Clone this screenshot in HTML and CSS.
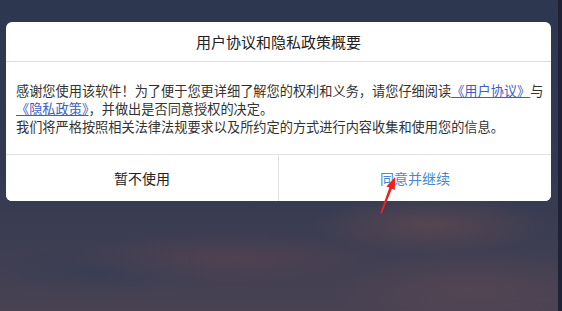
FILE: index.html
```html
<!DOCTYPE html>
<html lang="zh-CN">
<head>
<meta charset="utf-8">
<link rel="stylesheet" href="styles.css">
</head>
<body>
<div class="screen">
  <div class="dialog">
    <div class="dialog-title">用户协议和隐私政策概要</div>
    <div class="dialog-body">
      <p>感谢您使用该软件！为了便于您更详细了解您的权利和义务，请您仔细阅读<a class="link">《用户协议》</a>与<br><a class="link">《隐私政策》</a>，并做出是否同意授权的决定。</p>
      <p>我们将严格按照相关法律法规要求以及所约定的方式进行内容收集和使用您的信息。</p>
    </div>
    <div class="dialog-actions">
      <button class="btn btn-cancel">暂不使用</button>
      <button class="btn btn-ok">同意并继续</button>
    </div>
  </div>
  <svg class="arrow" width="24" height="44" viewBox="0 0 24 44">
    <path d="M4.2 40 L5.8 40.6 L16 15.8 L18.8 17 L19.2 4 L10.4 13.4 L13.4 14.6 Z" fill="#e8241c"/>
  </svg>
</div>
</body>
</html>
```
FILE: styles.css
```css
* { box-sizing: border-box; }
html, body { margin: 0; padding: 0; }
body {
  width: 562px;
  height: 311px;
  overflow: hidden;
  font-family: "Noto Sans CJK SC", "Noto Sans", sans-serif;
}
.screen {
  position: relative;
  width: 562px;
  height: 311px;
  padding: 22px 0 0 6px;
  border-right: 4px solid #1e2234;
  background:
    radial-gradient(ellipse 120px 30px at 430px 225px, rgba(120, 80, 80, 0.45), transparent),
    radial-gradient(ellipse 160px 25px at 230px 258px, rgba(110, 70, 80, 0.35), transparent),
    radial-gradient(ellipse 140px 40px at 470px 290px, rgba(105, 75, 85, 0.4), transparent),
    radial-gradient(ellipse 120px 25px at 100px 272px, rgba(50, 60, 85, 0.5), transparent),
    linear-gradient(to bottom, #2d374f 0%, #313a52 55%, #3c3d52 75%, #484252 100%);
}
.dialog {
  width: 545px;
  background: #fff;
  border-radius: 6px;
  overflow: hidden;
}
.dialog-title {
  height: 40px;
  line-height: 39px;
  text-align: center;
  font-size: 15px;
  color: #222;
  border-bottom: 1px solid #dedede;
}
.dialog-body {
  padding: 20px 6px 18px 10px;
  font-size: 13.2px;
  line-height: 18px;
  color: #333;
}
.dialog-body p { margin: 0; }
.link {
  color: #3d5ec4;
  text-decoration: underline;
}
.dialog-actions {
  display: flex;
  height: 47px;
  border-top: 1px solid #e2e2e2;
}
.btn {
  flex: 1;
  border: 0;
  background: #fff;
  font-family: inherit;
  font-size: 14px;
  padding: 0;
  margin: 0;
}
.btn-cancel {
  color: #222;
  border-right: 1px solid #e2e2e2;
}
.btn-ok { color: #4a86d6; }
.arrow {
  position: absolute;
  left: 376px;
  top: 173px;
}
```
